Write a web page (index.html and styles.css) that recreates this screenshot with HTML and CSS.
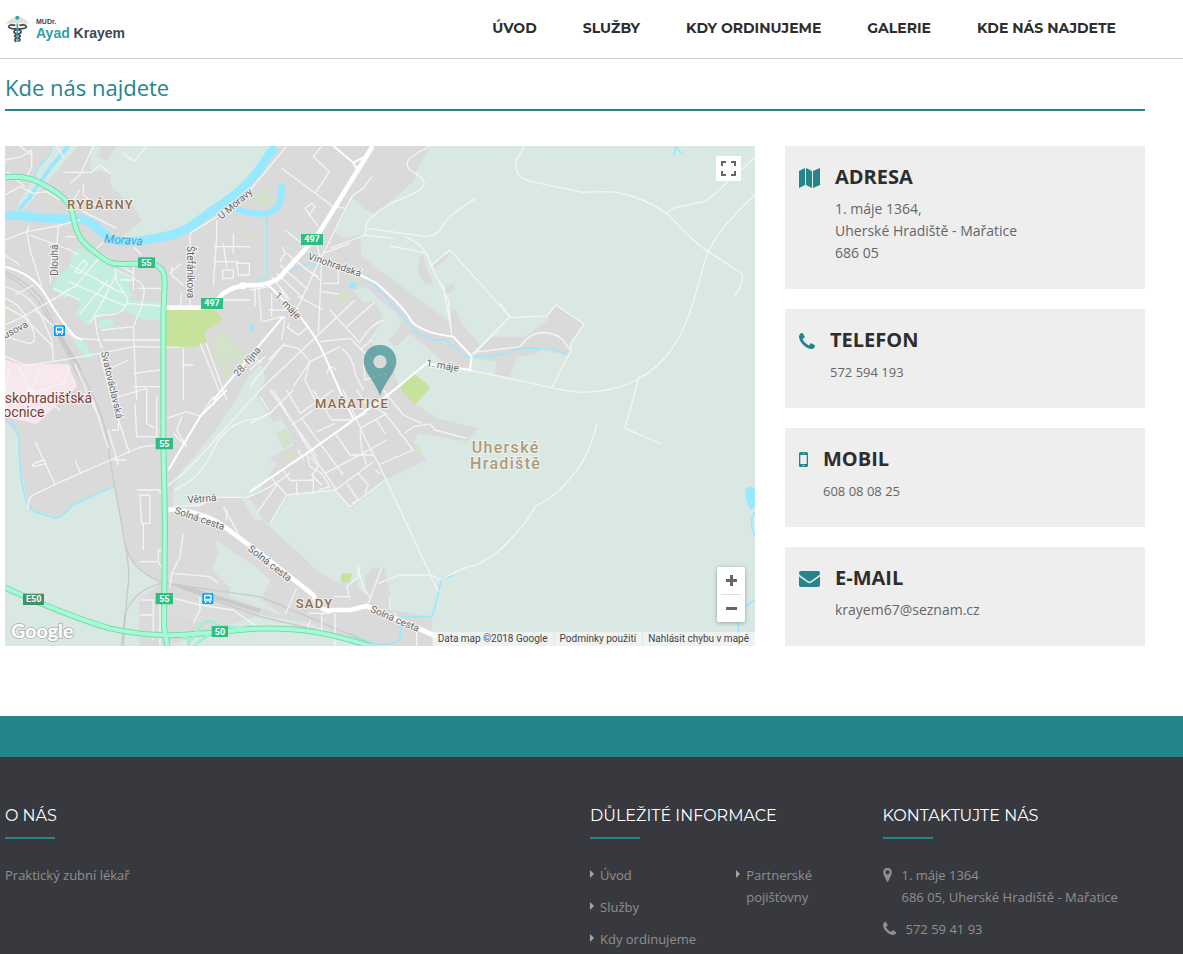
FILE: index.html
```html
<!DOCTYPE html>
<html lang="cs">
<head>
<meta charset="utf-8">
<meta name="viewport" content="width=device-width, initial-scale=1">
<title>Kde nás najdete – MUDr. Ayad Krayem</title>
<link rel="stylesheet" href="styles.css">
</head>
<body>
<header class="header">
  <div class="container header-inner">
    <a class="logo" href="#">
      <svg class="logo-mark" viewBox="0 0 75 84" aria-hidden="true">
        <path fill="#e4e0d8" d="M0 26Q18 8 34 5h7Q58 8 75 26Q63 24 55 27Q46 21 38 27Q29 21 20 27Q12 24 0 26Z"/>
        <g fill="none" stroke="#3d4852" stroke-width="5">
          <path d="M31 31C8 26 4 39 22 41C48 43 55 50 43 56C23 62 27 66 41 70C49 74 43 78 40 80"/>
          <path d="M43 31C67 26 71 39 53 41C27 43 21 50 32 56C52 62 48 66 34 70C26 74 30 78 34 80"/>
        </g>
        <path stroke="#3aa6a6" stroke-width="5" d="M37 26v54"/>
        <circle cx="37" cy="8" r="6" fill="#2fa3a5"/>
      </svg>
      <span class="logo-text"><span class="logo-title">MUDr.</span><span class="logo-name"><span class="logo-first">Ayad</span> Krayem</span></span>
    </a>
    <nav class="nav">
      <a href="#">ÚVOD</a>
      <a href="#">SLUŽBY</a>
      <a href="#">KDY ORDINUJEME</a>
      <a href="#">GALERIE</a>
      <a href="#">KDE NÁS NAJDETE</a>
    </nav>
  </div>
</header>

<main class="container main">
  <h1 class="page-title">Kde nás najdete</h1>
  <div class="content">
    <section class="map" aria-label="Mapa">
      <svg class="map-canvas" viewBox="15 18 2250 1500" preserveAspectRatio="xMidYMid slice">
        <!-- built-up land -->
        <g class="urban">
          <path d="M15 18H275L270 88L328 100L335 140L400 200L425 240L390 272L345 300L440 310L620 240L780 90L840 18H1295L1250 90L1243 122L1125 222L1090 205L1060 175L1005 275L1030 295L1080 285L1085 350L1340 540L1355 505L1370 512L1380 545L1440 615L1465 590H1575L1645 540V525L1668 495L1752 552L1712 610V635L1700 645L1625 630L1600 645L1550 650L1530 712L1485 705L1490 665L1420 655L1400 690L1330 665L1230 580L1190 620L1165 605L1205 550L1195 525L1130 470L1100 440L1060 450L1090 490L1125 480L1150 540L1105 600L1170 665L1200 745L1250 795L1310 835L1435 865L1400 905L1255 880L1240 905L1280 960L1155 1020L1055 1105L1005 1050L865 1068L810 1155L750 1110L860 1205L960 1300L1020 1330L1080 1320L1120 1280L1155 1285L1175 1390V1410L1295 1430V1518H1080L930 1450L780 1425L500 1518H418V1390L425 1370L480 1335L400 1270L375 1220L345 1038L220 1095L180 1135L90 1110L65 1000L55 890L15 840Z"/>
          <path d="M300 18H350L320 65L298 50Z"/>
          <path d="M1270 345L1285 400L1300 430L1277 437L1252 395L1260 350ZM1300 375L1340 340L1345 350L1305 385ZM1335 445L1360 430L1365 448L1338 465Z"/>
        </g>
        <g class="open-land">
          <path d="M160 18H235L75 205L45 235L55 190Z"/>
          <path d="M780 675L745 710L720 760L640 880L540 1000L518 1060L520 1100L600 1100L650 1075L735 1070L780 1050L830 970L808 955L880 915L845 835L820 850L770 765L795 720L790 680Z"/>
          <path d="M645 1200L780 1290L755 1270L810 1320L785 1380L855 1430L690 1370L690 1345L635 1285L655 1240Z"/>
          <path d="M722 1070H745L790 1140H765Z"/>
          <path d="M1095 1300L1075 1310L1070 1335L1098 1365Z"/>
          <path d="M500 1360L700 1410L760 1460L600 1450L500 1420Z" opacity=".25"/>
        </g>
        <!-- parks, hospital and centre -->
        <path class="centre" d="M235 320L395 420L385 440L398 465L380 480L485 488V540L425 538L385 515L370 510L285 535L262 555L225 525L245 490L212 465L195 475L155 445L185 400L210 375L215 345ZM300 540L340 535V558L295 567ZM220 600L250 595L280 655H258L235 625Z"/>
        <path class="hospital" d="M15 660L65 672L205 672L232 740L165 800L110 852L15 830Z"/>
        <path class="park" d="M498 508H640L670 537L612 578L620 608L585 621H498Z"/>
        <path class="park" d="M1240 698L1292 742L1245 795L1200 745Z"/>
        <path class="park" d="M1025 1300H1055L1052 1325L1022 1327Z"/>
        <path class="garden" d="M738 288H765V305H738ZM785 140H810V165H785ZM760 168H825V185H805V200H785V185H760ZM750 288H765V305H750ZM1013 455H1041V488H1013ZM645 580L670 570L695 600L710 620L740 650L720 665L690 650V690L665 710L670 680L645 650L640 625ZM670 690H695V710H670ZM22 515H32V545H22ZM828 880L855 866L875 910L850 925ZM848 950L880 932L884 948L855 965ZM1242 920L1255 913L1264 930L1250 942Z"/>
        <!-- water -->
        <g class="water">
          <path stroke-width="27" d="M15 228C60 222 110 236 170 236L240 238C285 242 300 280 335 297C375 315 445 298 500 288C570 275 600 235 655 200C710 165 740 135 780 85L825 18"/>
          <path stroke-width="12" d="M205 18L150 85L88 172L55 212"/>
          <path stroke-width="4" d="M155 18Q160 35 125 72Q95 105 115 125L90 180"/>
          <path stroke-width="19" d="M705 205C740 220 780 222 805 220C835 210 850 180 843 130"/>
          <path stroke-width="4" d="M801 230V410L750 437M850 402L925 370L1060 392L1120 430L1200 518L1240 570L1300 600H1335L1400 650L1480 648L1570 624L1655 626L1700 642"/>
          <path fill="#98e9ff" d="M1047 433L1060 425L1072 435L1063 445L1050 443ZM751 550H761V573H751Z"/>
          <path stroke-width="5" d="M15 843C45 845 60 880 57 930C60 990 65 1045 80 1085C90 1120 120 1118 150 1130C180 1140 185 1130 218 1095L345 1038"/>
          <path stroke-width="5" d="M1360 1306L1325 1315L1315 1360L1297 1430H1205L1200 1500Q1160 1520 1120 1510L1090 1500L1050 1480"/>
          <path stroke-width="5" d="M2020 48L2028 20L2045 40M2265 1115C2245 1140 2260 1180 2270 1200M2265 1380L2215 1415V1518"/>
          <path fill="#98e9ff" d="M2235 1048L2248 1040L2275 1050V1095L2250 1110L2240 1080Z"/>
        </g>
        <!-- railways -->
        <g class="rail">
          <path d="M15 395Q80 425 120 470L170 570Q230 660 285 780Q320 850 330 960L375 1210Q395 1300 500 1330L780 1370L1100 1505"/>
          <path d="M15 403Q85 440 125 500L170 580L230 700L270 770M365 1518L375 1420Q410 1340 500 1328L780 1430L950 1470M375 1210Q390 1290 385 1330T370 1518"/>
          <path stroke-width="12" d="M170 570L240 690M530 1335L780 1413"/>
        </g>
        <!-- local streets -->
        <g class="streets">
          <path d="M15 60L65 50L95 30V80L80 110L110 130M15 165L60 140L100 160L140 155L180 180M60 18L95 45M190 97H275M275 97L300 75L330 100M370 40L402 65L440 18M210 130L240 105L280 18M240 150L220 180L250 215L350 265M250 130V165L300 205M170 18L190 50M20 95L75 140"/>
          <path d="M15 300L80 275L170 258L240 240M80 275L88 255M80 275L90 330L125 440M90 285L210 330L235 345M175 258L170 320L155 350L150 430M15 345L60 375M195 290L240 290M300 340L400 400M275 340L310 305M400 320L425 345"/>
          <path d="M15 440Q85 460 120 520L155 600L160 665M15 475Q60 490 90 550T85 610L15 590M15 555L70 530L165 475M45 465L100 435M160 480L205 450M105 510L175 570M165 550L225 595L300 600M15 500L70 530L160 620"/>
          <path d="M185 460L225 440L300 350M210 375L340 445M205 425L380 500M240 520L325 420M270 550L310 480L350 400M225 395L250 360L262 372L240 400ZM160 445L240 480M300 425L345 450L375 460"/>
          <path d="M380 490L485 498M345 385L350 425L385 480L375 500Q365 525 310 525L285 530L290 575L305 625M345 387L410 420Q435 430 432 460L425 500L400 560L410 780M360 420H400M400 380V450M305 570L400 560M310 600H485M15 650L80 675L160 665L300 640L400 620L540 622M415 445H485"/>
          <path d="M570 500V280L650 230L750 150L860 18M515 380V405L550 435M508 400L545 370M650 240V290L640 435M640 320H750M670 310L680 380M700 280V340M640 365H715M668 390H700V415H668V390M610 480H750M540 510L545 460M710 370H748V405H715Z"/>
          <path d="M600 610L660 760M618 608L680 780M550 625V780M580 675H545M225 670L240 710L300 840M275 770L325 925M210 680L190 730L60 770M30 690L15 750L80 800M55 680L110 790M120 690L95 750L180 810M300 640L335 780L388 938M320 690L385 660M400 700L480 690M400 740H480M340 775L440 745V850L465 865"/>
          <path d="M85 1105Q80 1070 110 1060L165 1033L400 930Q430 915 480 917M105 905L165 1033M225 960L242 1000M135 960Q90 970 100 980L140 970M325 870L355 975M335 870H355V850M405 790L410 890H470V770M340 960H380M410 1050H480V1060M420 1065H450V1150H425ZM430 1150V1230M485 1230H475V1265H420M475 1265L490 1290"/>
          <path d="M500 1040L550 1000L600 950L780 750L1065 480M500 835L560 815L605 830M520 880L560 920L530 870L545 830M600 830L640 770M550 1180L540 1250L515 1300L510 1340M520 1300L630 1310L655 1330M670 1100L715 1180M500 1370L600 1395L700 1410L770 1460M600 1370V1410L580 1450M425 1380H460V1500M420 1425H460M480 1370V1518M680 1110V1140"/>
          <path d="M520 1050Q600 1020 640 930T780 835L810 818M520 1100L600 1095L650 1072H735Q790 1060 870 1000"/>
        </g>
        <g class="streets" transform="translate(750 0)">
          <path d="M95 85L250 200L290 205M215 18L190 50L238 95L195 160M165 205L185 190L195 200L178 225ZM165 205L205 260M290 200L310 165L340 145L365 110M305 170L205 370L130 530M105 270L155 310M97 320L105 340L90 365M110 340L210 420M90 375L175 450M80 400L160 475M65 410L120 480M200 310L215 370L205 580M220 340L300 310M240 325L345 285L350 250M180 395L205 410M220 430H265V390L245 380M215 455L265 462"/>
          <path d="M350 250Q380 205 470 170T495 100T545 18M350 265L530 290Q565 285 580 255T678 175M345 285L430 295M465 290Q520 310 540 365T580 440L605 580M420 318L525 338M545 375L600 330L780 530L670 645M540 370L595 480L605 585"/>
          <path d="M15 435V500M25 440L35 545M0 450L60 440M65 460V530M55 510H110M40 545L95 530M105 530L95 600M110 560L145 585L175 560M120 550Q100 565 150 585M90 440L130 520M145 470L220 510M0 740L60 665L100 615L145 625L180 665L165 720L195 780M130 740L180 665L270 620M210 605L300 595M240 510L330 610M290 560L375 485M330 605Q365 550 400 540M275 625Q310 650 315 700L340 750M300 595L365 660M330 630L365 600M0 690L45 650M55 660L105 610M35 670L0 640M230 700Q240 670 260 690M340 650L345 720L410 700"/>
        </g>
        <g class="streets" transform="translate(750 750)">
          <path d="M0 100L60 70L130 0M70 0L180 185L260 300M110 0L150 70L250 0M125 105L190 60M60 0L200 200M30 20L55 60M190 0L245 90L310 90M155 85L210 160L280 255M200 125L255 100M255 130L300 195L370 195M210 160L300 100M225 250L320 200L410 150M310 90L350 70M330 115L410 70M380 90L405 130M280 0L345 145L390 230L565 605M330 120L335 180L350 225M385 225L490 180L405 70L370 50M350 65L325 45"/>
          <path d="M400 0L460 75L515 100M465 130L490 110L540 102L555 120L650 145M65 265L110 315L255 300L370 215M80 285L20 370M110 315L60 400M140 275V310M190 250V305M100 240L120 272L190 270M255 300L300 350L405 270M290 280L325 330L305 340M325 250L355 285L345 310M390 250L375 240"/>
          <path d="M170 190L180 230L215 250L240 290L205 300M180 200L205 230L185 255L215 285M145 180L160 210M320 0L360 60"/>
          <path d="M355 640L395 535M385 580L450 555L545 555L570 570L600 555Q630 535 680 525Q760 480 780 450M300 625L290 590L325 560V525M325 530Q335 600 360 620M250 620H300M175 670H240M140 595L105 675M215 670V730M255 670V768M180 690L170 730M420 660V620M500 710V768"/>
        </g>
        <g class="streets">
          <path d="M1573 20L1550 60Q1535 110 1595 125L1750 157Q1840 150 1885 165Q1980 195 2020 240T2110 325L2225 400Q2235 425 2205 467M1997 220L2025 203L2120 183L2265 52M2265 165Q2150 270 2123 340C2090 430 2080 530 2020 620C1960 710 1870 755 1750 757C1680 757 1600 725 1400 690M1918 707L1875 865L1985 912M1790 850C1770 960 1700 1040 1640 1080L1605 1100Q1590 1140 1500 1230M1500 490L1530 530L1420 640M1530 533L1640 528L1668 495L1752 552L1712 610V635L1655 743M1415 638L1560 620Q1610 550 1685 595L1710 630"/>
        </g>
        <!-- collector and main roads -->
        <g class="collectors">
          <path d="M15 380Q100 400 140 470T220 585L245 600M1000 18L1060 68L1095 50M1060 68L1075 95M805 435L900 530Q950 590 975 650L1025 765L1060 835M640 780L850 530M750 1055L920 940L1060 840L1170 760L1280 670L1410 690L1415 650L1360 590Q1270 580 1235 545Q1220 510 1130 430L1075 402M505 990L600 830L680 750"/>
        </g>
        <g class="main-roads">
          <path d="M498 503H600Q640 500 670 460Q700 440 740 435Q820 440 850 400L950 290L1040 145L1118 18"/>
          <path d="M505 1108Q610 1110 680 1165L780 1240L940 1365Q960 1420 1000 1410H1050L1100 1398L1300 1485L1430 1530"/>
        </g>
        <circle cx="728" cy="437" r="11" fill="#fff"/>
        <!-- highways -->
        <path class="highway-edge" d="M15 112C80 103 115 125 150 145C205 178 215 200 222 240C230 285 245 307 280 332C315 360 330 375 370 372L440 370C480 372 496 390 494 430L490 520V900L495 1160L492 1460L502 1518M15 1343C130 1395 240 1440 330 1465C480 1500 590 1483 750 1467C900 1460 990 1480 1110 1518"/>
        <path class="ramp" d="M570 1505L600 1460Q620 1430 660 1458L740 1466M540 1485Q570 1490 565 1518M580 1518L640 1475"/>
        <path class="highway" d="M15 112C80 103 115 125 150 145C205 178 215 200 222 240C230 285 245 307 280 332C315 360 330 375 370 372L440 370C480 372 496 390 494 430L490 520V900L495 1160L492 1460L502 1518M15 1343C130 1395 240 1440 330 1465C480 1500 590 1483 750 1467C900 1460 990 1480 1110 1518"/>
        <!-- road shields -->
        <g class="shields">
          <path d="M414 352H465V384H414ZM603 474H669V507H603ZM903 282H969V315H903ZM467 894H519V928H467ZM467 1359H519V1393H467ZM635 1458H684V1491H635Z"/>
          <path fill="#41906c" d="M69 1361H132V1395H69Z"/>
          <text x="439" y="379">55</text><text x="636" y="499">497</text><text x="936" y="307">497</text>
          <text x="493" y="921">55</text><text x="493" y="1385">55</text><text x="660" y="1484">50</text><text x="101" y="1387">E50</text>
        </g>
        <!-- railway stations -->
        <g id="station">
          <rect x="162" y="556" width="33" height="32" rx="3" fill="#00a0f8"/>
          <path fill="#fff" fill-rule="evenodd" d="M170 560H187Q190 560 190 563V580H187V585H183V580H174V585H170V580H167V563Q167 560 170 560ZM171 565V572H186V565ZM171 575V578H174V575ZM183 575V578H186V575Z"/>
        </g>
        <use href="#station" x="445" y="804"/>
        <!-- labels -->
        <g class="street-names">
          <text transform="translate(173 407) rotate(-90)">Dlouhá</text>
          <text transform="translate(560 318) rotate(90)">Štefánikova</text>
          <text transform="translate(664 239) rotate(-40)">U Moravy</text>
          <text transform="translate(15 596) rotate(-27)">usova</text>
          <text transform="translate(303 637) rotate(77)">Svatováclavská</text>
          <text transform="translate(714 712) rotate(-49)">28. října</text>
          <text transform="translate(822 469) rotate(46)">1. máje</text>
          <text transform="translate(922 357) rotate(19)">Vinohradská</text>
          <text transform="translate(1278 678) rotate(10)">1. máje</text>
          <text transform="translate(563 1090) rotate(-5)">Větrná</text>
          <text transform="translate(522 1120) rotate(19)">Solná cesta</text>
          <text transform="translate(742 1230) rotate(38)">Solná cesta</text>
          <text transform="translate(1109 1415) rotate(23)">Solná cesta</text>
        </g>
        <text class="river-name" transform="translate(312 308) rotate(4)">Morava</text>
        <text class="hospital-name" x="14" y="790">skohradišťská</text>
        <text class="hospital-name" x="10" y="832">ocnice</text>
        <path class="marker" fill-rule="evenodd" d="M1140 615C1110 615 1090 638 1091 667C1093 698 1125 725 1140 767C1155 725 1187 698 1189 667C1190 638 1170 615 1140 615ZM1140 645A20 20 0 1 1 1140 685A20 20 0 1 1 1140 645Z"/>
        <g class="places">
          <text x="201" y="208">RYBÁRNY</text>
          <text x="945" y="803">MAŘATICE</text>
          <text x="887" y="1403">SADY</text>
        </g>
        <g class="city">
          <text x="1415" y="938">Uherské</text>
          <text x="1410" y="986">Hradiště</text>
        </g>
        <text class="provider" x="33" y="1493">Google</text>
      </svg>
      <button class="map-button fullscreen" type="button" aria-label="Celá obrazovka">
        <svg viewBox="0 0 15 15" width="15" height="15" fill="none" stroke="#666" stroke-width="2"><path d="M1 5V1H5M10 1H14V5M14 10V14H10M5 14H1V10"/></svg>
      </button>
      <div class="zoom">
        <button class="map-button" type="button" aria-label="Přiblížit"><svg viewBox="0 0 11 11" width="11" height="11" stroke="#666" stroke-width="3"><path d="M0 5.5H11M5.5 0V11"/></svg></button>
        <button class="map-button" type="button" aria-label="Oddálit"><svg viewBox="0 0 11 11" width="11" height="11" stroke="#666" stroke-width="3"><path d="M0 5.5H11"/></svg></button>
      </div>
      <div class="credits"><span>Data map ©2018 Google</span><a href="#">Podmínky použití</a><a href="#">Nahlásit chybu v mapě</a></div>
    </section>

    <div class="cards">
      <section class="card">
        <svg class="card-icon" viewBox="0 0 21 20" width="21" height="20"><path d="M0 3L6 0V17L0 20ZM7 0L13 3V20L7 17ZM14 3L21 0V17L14 20Z"/></svg>
        <div><h2>ADRESA</h2><p>1. máje 1364,<br>Uherské Hradiště - Mařatice<br>686 05</p></div>
      </section>
      <section class="card small">
        <svg class="card-icon" viewBox="0 0 1408 1408" width="16" height="16"><path d="M1408 1112q0 27-10 70.500t-21 68.500q-21 50-122 106q-94 51-186 51q-27 0-53-3.500t-57.500-12.500t-47-14.500t-55.500-20.500t-49-18q-98-35-175-83q-127-79-264-216t-216-264q-48-77-83-175q-3-9-18-49t-20.500-55.500t-14.500-47t-12.500-57.500t-3.500-53q0-92 51-186q56-101 106-122q25-11 68.500-21t70.500-10q14 0 21 3q18 6 53 76q11 19 30 54t35 63.500t31 53.500q3 4 17.500 25t21.500 35.500t7 28.500q0 20-28.500 50t-62 55t-62 53t-28.500 46q0 9 5 22.500t8.500 20.500t14 24t11.500 19q76 137 174 235t235 174q2 1 19 11.500t24 14t20.500 8.500t22.500 5q18 0 46-28.500t53-62t55-62t50-28.500q14 0 28.500 7t35.500 21.500t25 17.500q25 15 53.500 31t63.500 35t54 30q70 35 76 53q3 7 3 21z"/></svg>
        <div><h2>TELEFON</h2><p>572 594 193</p></div>
      </section>
      <section class="card small">
        <svg class="card-icon" viewBox="0 0 9 15" width="9" height="15"><path fill-rule="evenodd" d="M1.500 0H7.500Q9 0 9 1.500V13.500Q9 15 7.500 15H1.500Q0 15 0 13.500V1.500Q0 0 1.500 0ZM1.300 3V12H7.700V3ZM3.500 1V1.600H5.500V1ZM4.500 12.700A.8.8 0 1 0 4.500 14.300A.8.8 0 1 0 4.500 12.700Z"/></svg>
        <div><h2>MOBIL</h2><p>608 08 08 25</p></div>
      </section>
      <section class="card">
        <svg class="card-icon" viewBox="0 -2 21 18" width="21" height="18"><path d="M2 0H19Q21 0 21 2Q21 4 19 5L12 10Q10.500 11 9 10L2 5Q0 4 0 2Q0 0 2 0ZM0 5.500L8.500 11.500Q10.500 13 12.500 11.500L21 5.500V14Q21 16 19 16H2Q0 16 0 14Z"/></svg>
        <div><h2>E-MAIL</h2><p>krayem67@seznam.cz</p></div>
      </section>
    </div>
  </div>
</main>

<footer class="footer">
  <div class="container footer-grid">
    <section>
      <h2>O NÁS</h2>
      <p>Praktický zubní lékař</p>
    </section>
    <section>
      <h2>DŮLEŽITÉ INFORMACE</h2>
      <div class="link-columns">
        <ul>
          <li><a href="#">Úvod</a></li>
          <li><a href="#">Služby</a></li>
          <li><a href="#">Kdy ordinujeme</a></li>
        </ul>
        <ul>
          <li><a href="#">Partnerské pojišťovny</a></li>
        </ul>
      </div>
    </section>
    <section>
      <h2>KONTAKTUJTE NÁS</h2>
      <div class="contact">
        <svg viewBox="0 0 8 13" width="9" height="14"><path fill-rule="evenodd" d="M4 0Q8 0 8 4Q8 5.500 7 7.500L4.600 12.600Q4 13.400 3.400 12.600L1 7.500Q0 5.500 0 4Q0 0 4 0ZM4 2A2 2 0 1 0 4 6A2 2 0 1 0 4 2Z"/></svg>
        <span>1. máje 1364<br>686 05, Uherské Hradiště - Mařatice</span>
      </div>
      <div class="contact">
        <svg viewBox="0 0 1408 1408" width="13" height="13"><path d="M1408 1112q0 27-10 70.500t-21 68.500q-21 50-122 106q-94 51-186 51q-27 0-53-3.500t-57.500-12.500t-47-14.500t-55.500-20.500t-49-18q-98-35-175-83q-127-79-264-216t-216-264q-48-77-83-175q-3-9-18-49t-20.500-55.500t-14.500-47t-12.500-57.500t-3.500-53q0-92 51-186q56-101 106-122q25-11 68.500-21t70.500-10q14 0 21 3q18 6 53 76q11 19 30 54t35 63.500t31 53.500q3 4 17.500 25t21.500 35.500t7 28.500q0 20-28.500 50t-62 55t-62 53t-28.500 46q0 9 5 22.500t8.500 20.500t14 24t11.500 19q76 137 174 235t235 174q2 1 19 11.500t24 14t20.500 8.500t22.500 5q18 0 46-28.500t53-62t55-62t50-28.500q14 0 28.500 7t35.500 21.500t25 17.500q25 15 53.500 31t63.500 35t54 30q70 35 76 53q3 7 3 21z"/></svg>
        <span>572 59 41 93</span>
      </div>
    </section>
  </div>
</footer>
</body>
</html>
```
FILE: styles.css
```css
* { box-sizing: border-box; }
body {
  margin: 0;
  background: #fff;
  color: #666;
  font: 14px/22px "Open Sans", "Noto Sans", sans-serif;
}
h1, h2, p, ul { margin: 0; padding: 0; }
ul { list-style: none; }
a { color: inherit; text-decoration: none; }
.container { max-width: 1170px; margin-left: 5px; }

.header { border-bottom: 1px solid #ccc; }
.header-inner { display: flex; align-items: center; justify-content: space-between; height: 58px; padding-right: 59px; }
.logo { display: flex; align-items: center; gap: 6px; }
.logo-mark { width: 25px; height: 28px; }
.logo-text { display: flex; flex-direction: column; font-family: "Liberation Sans", Arial, sans-serif; font-weight: 700; color: #3d4852; }
.logo-title { font-size: 7px; line-height: 8px; }
.logo-name { font-size: 14px; line-height: 14px; }
.logo-first { color: #2fa0a2; }
.nav { display: flex; gap: 46px; padding-bottom: 2px; font-family: Montserrat, Inter, sans-serif; font-size: 14px; font-weight: 700; color: #2d2d2d; white-space: nowrap; }

.main { padding-right: 30px; padding-bottom: 70px; }
.page-title { padding: 13px 0 7px; border-bottom: 2px solid #26858a; color: #26858a; font-size: 22px; line-height: 30px; font-weight: 400; }
.content { display: grid; grid-template-columns: 25fr 12fr; gap: 30px; padding-top: 35px; }

.map { position: relative; overflow: hidden; min-height: 500px; background: #dae8e4; }
.map-canvas { position: absolute; inset: 0; width: 100%; height: 100%; font-family: Roboto, sans-serif; }
.urban { fill: #dadada; }
.open-land { fill: #dae8e4; }
.centre { fill: #c3eee0; }
.hospital { fill: #f8e8ee; }
.park { fill: #c7e29b; }
.garden { fill: #d3e2c8; }
.water { fill: none; stroke: #98e9ff; }
.rail { fill: none; stroke: #c9c9c9; stroke-width: 4; }
.streets { fill: none; stroke: #f3f5f4; stroke-width: 4; stroke-linejoin: round; }
.collectors { fill: none; stroke: #fff; stroke-width: 6; }
.main-roads { fill: none; stroke: #fff; stroke-width: 14; }
.highway-edge { fill: none; stroke: #7cd8ae; stroke-width: 18; }
.highway { fill: none; stroke: #a4fcd6; stroke-width: 12; }
.ramp { fill: none; stroke: #a0efcd; stroke-width: 8; }
.shields { fill: #2fbe82; }
.shields text { fill: #fff; font-size: 27px; font-weight: 700; text-anchor: middle; }
.street-names { fill: #666; stroke: #f4f4f4; stroke-width: 6; paint-order: stroke; font-size: 30px; }
.river-name { fill: #4c9fc4; font-size: 36px; font-style: italic; }
.hospital-name { fill: #733c36; stroke: #fbf3f5; stroke-width: 6; paint-order: stroke; font-size: 42px; }
.marker { fill: #2c868b; fill-opacity: .64; }
.places { fill: #8a6d4f; stroke: #f3f0ec; stroke-width: 6; paint-order: stroke; font-size: 39px; font-weight: 500; letter-spacing: 4px; }
.city { fill: #ac9b7b; stroke: #eff3ee; stroke-width: 6; paint-order: stroke; font-size: 48px; font-weight: 500; letter-spacing: 4px; }
.provider { fill: #fff; stroke: #b4bab8; stroke-width: 6; paint-order: stroke; font-family: Lato, sans-serif; font-size: 59px; font-weight: 700; }
.map-button { display: flex; align-items: center; justify-content: center; padding: 0; border: 0; background: #fff; cursor: pointer; }
.fullscreen { position: absolute; top: 10px; right: 14px; width: 25px; height: 25px; }
.zoom { position: absolute; right: 10px; bottom: 24px; width: 28px; padding: 0 4px; border-radius: 2px; background: #fff; box-shadow: 0 1px 4px rgba(0, 0, 0, .3); }
.zoom .map-button { width: 100%; height: 27px; }
.zoom .map-button + .map-button { height: 28px; border-top: 1px solid #ddd; }
.credits { position: absolute; right: 0; bottom: 0; display: flex; gap: 1px; color: #444; font: 10px/14px Roboto, sans-serif; }
.credits > * { padding: 0 6px 0 5px; background: rgba(245, 245, 245, .75); }

.cards { display: grid; align-content: start; gap: 20px; }
.card { display: flex; align-items: flex-start; gap: 15px; padding: 20px 14px 25px; background: #eee; }
.card-icon { flex: none; margin-top: 2px; fill: #26858a; }
.small .card-icon { margin-top: 4px; }
.card h2 { margin-bottom: 10px; color: #2d2d2d; font-size: 20px; line-height: 22px; font-weight: 700; }
.card.small p { font-size: 13px; }

.footer { border-top: 41px solid #26858a; background: #38393e; color: #8f8f91; font-size: 13px; }
.footer-grid { display: grid; grid-template-columns: 2fr 1fr 1fr; padding: 49px 0 4px; }
.footer h2 { margin-bottom: 25px; color: #fff; font: 400 16px/20px Montserrat, Inter, sans-serif; }
.footer h2::after { content: ""; display: block; width: 50px; height: 2px; margin-top: 11px; background: #26858a; }
.link-columns { display: grid; grid-template-columns: 1fr 1fr; }
.link-columns ul { display: grid; align-content: start; gap: 10px; padding-right: 15px; }
.link-columns li { display: flex; align-items: flex-start; gap: 6px; }
.link-columns li::before { content: ""; flex: none; margin-top: 6px; border: 4px solid transparent; border-left-color: #a5a5a6; border-right: 0; }
.contact { display: flex; gap: 10px; margin-bottom: 10px; }
.contact:last-child { margin-bottom: 0; }
.contact svg { flex: none; margin-top: 4px; fill: #8f8f91; }
```
